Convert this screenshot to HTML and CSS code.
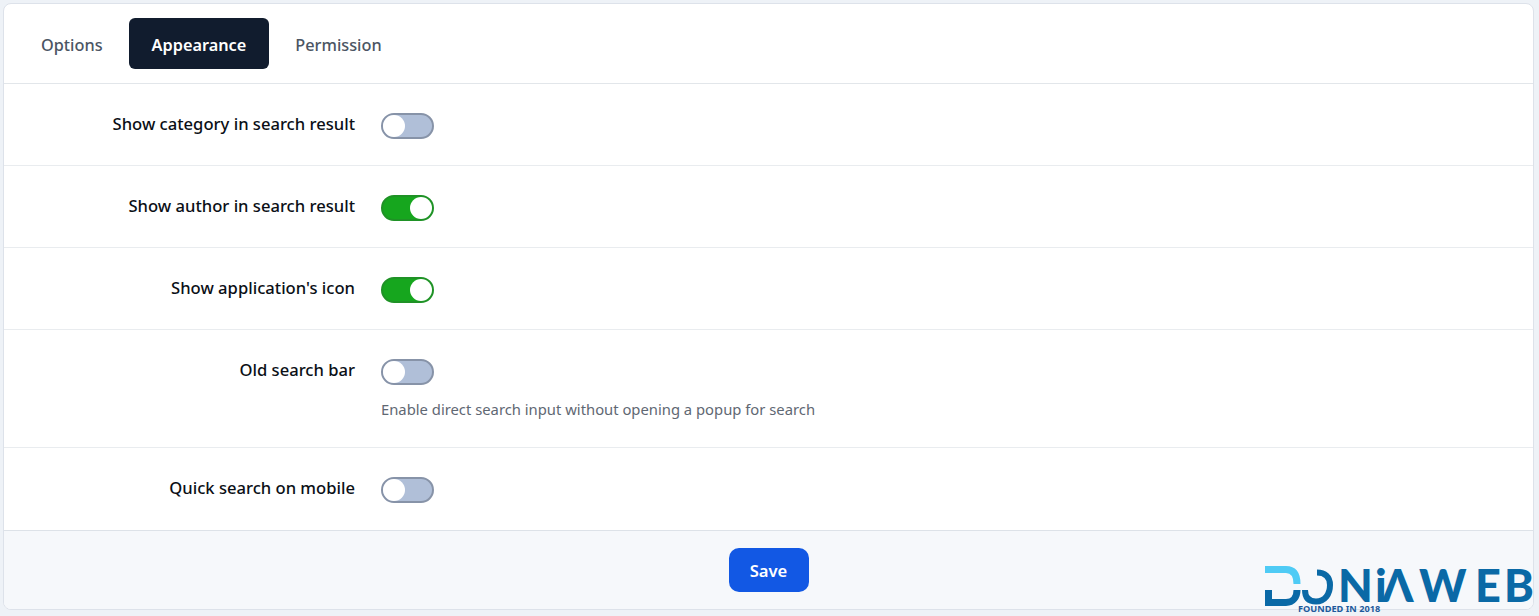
FILE: index.html
```html
<!DOCTYPE html>
<html lang="en">
<head>
    <meta charset="UTF-8">
    <meta name="viewport" content="width=device-width, initial-scale=1.0">
    <title>Appearance Settings</title>
    <link rel="stylesheet" href="styles.css">
</head>
<body>
    <div class="card">
        <!-- Tabs -->
        <nav class="tabs">
            <a href="#" class="tab">Options</a>
            <a href="#" class="tab active">Appearance</a>
            <a href="#" class="tab">Permission</a>
        </nav>

        <!-- Settings rows -->
        <div class="row">
            <label class="row-label">Show category in search result</label>
            <div class="row-field"><span class="switch"></span></div>
        </div>
        <div class="row">
            <label class="row-label">Show author in search result</label>
            <div class="row-field"><span class="switch on"></span></div>
        </div>
        <div class="row">
            <label class="row-label">Show application's icon</label>
            <div class="row-field"><span class="switch on"></span></div>
        </div>
        <div class="row row-help">
            <label class="row-label">Old search bar</label>
            <div class="row-field">
                <span class="switch"></span>
                <p class="help">Enable direct search input without opening a popup for search</p>
            </div>
        </div>
        <div class="row last">
            <label class="row-label">Quick search on mobile</label>
            <div class="row-field"><span class="switch"></span></div>
        </div>

        <!-- Footer -->
        <footer class="card-footer">
            <button class="save">Save</button>
        </footer>
    </div>

    <!-- Watermark logo -->
    <svg class="logo" width="275" height="60" viewBox="0 -8 275 60">
        <path d="M1 6.5H22C30 6.5 33 12 33 21" fill="none" stroke="#4fcbf5" stroke-width="7"/>
        <path d="M4.5 27V39.5H22C29 39.5 33 34 33 27" fill="none" stroke="#0a69a6" stroke-width="7"/>
        <path d="M41 27C41 35 45 38.5 52 38.5C61 38.5 66 31 66 22C66 14 61 9.5 53 9.5" fill="none" stroke="#0a69a6" stroke-width="6"/>
        <text class="logo-name" x="74 111 118" y="39">NiΛ</text>
        <text class="logo-name" x="155 211 240" y="39">WEB</text>
        <text class="logo-sub" x="34" y="49">FOUNDED IN 2018</text>
    </svg>
</body>
</html>
```

FILE: styles.css
```css
/* General Styles */
body {
    margin: 0;
    height: 616px;
    overflow: hidden;
    padding: 3px 5px 0 3px;
    box-sizing: border-box;
    font-family: "Noto Sans", sans-serif;
    background-color: #eef2f7;
}

/* Card */
.card {
    height: 607px;
    display: flex;
    flex-direction: column;
    box-sizing: border-box;
    background: #fff;
    border: 1px solid #dde2ea;
    border-radius: 8px;
    overflow: hidden;
}

/* Tabs */
.tabs {
    display: flex;
    align-items: center;
    gap: 3px;
    height: 79px;
    padding: 0 14px;
    flex-shrink: 0;
    border-bottom: 1px solid #e2e6ea;
}

.tab {
    padding: 0 23px;
    height: 51px;
    line-height: 54px;
    font-size: 16.3px;
    font-weight: 500;
    color: #4b5563;
    text-decoration: none;
    border-radius: 6px;
}

.tab.active {
    background: #111c2e;
    color: #fff;
    font-weight: 600;
}

/* Setting rows */
.row {
    display: flex;
    gap: 26px;
    height: 82px;
    padding-top: 28px;
    box-sizing: border-box;
    flex-shrink: 0;
    border-bottom: 1px solid #e9ecef;
}

.row-help {
    height: 118px;
}

.row.last {
    border-bottom: none;
}

.row-label {
    width: 351px;
    text-align: right;
    font-size: 16.6px;
    font-weight: 500;
    line-height: 24px;
    color: #0b0f16;
}

.help {
    margin: 14px 0 0;
    font-size: 14.8px;
    line-height: 20px;
    color: #5f6873;
}

/* Switch */
.switch {
    display: block;
    position: relative;
    width: 53px;
    height: 26px;
    margin-top: 0.5px;
    box-sizing: border-box;
    background: #b0bfd8;
    border: 2px solid #8793a8;
    border-radius: 13px;
}

.switch::after {
    content: "";
    position: absolute;
    left: 0;
    top: 0;
    width: 22px;
    height: 22px;
    background: #fff;
    border-radius: 50%;
}

.switch.on {
    background: #16a61e;
    border-color: #1f9226;
}

.switch.on::after {
    left: auto;
    right: 0;
}

/* Footer */
.card-footer {
    flex: 1;
    display: flex;
    justify-content: center;
    align-items: center;
    background: #f6f8fb;
    border-top: 1px solid #dde2e8;
}

.save {
    width: 80px;
    height: 44px;
    border: none;
    border-radius: 10px;
    background: #1258e4;
    color: #fff;
    font-family: inherit;
    font-size: 16.6px;
    font-weight: 600;
}

/* Logo */
.logo {
    position: absolute;
    left: 1264px;
    top: 555px;
}

.logo-name {
    font-family: "Lato", sans-serif;
    font-size: 45px;
    font-weight: 900;
    fill: #0a69a6;
}

.logo-sub {
    font-family: "Noto Sans", sans-serif;
    font-size: 9.2px;
    font-weight: 700;
    fill: #1d5a9c;
}
```
